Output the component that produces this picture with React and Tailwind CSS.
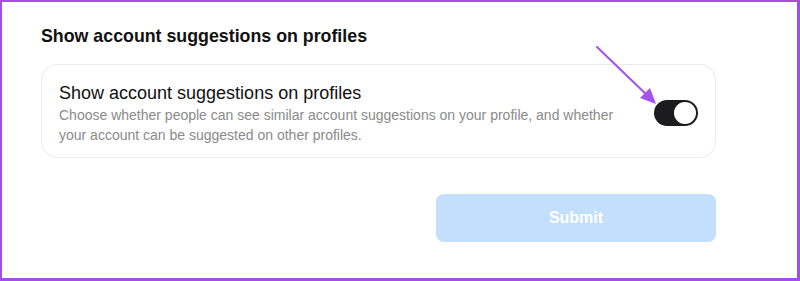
import React, { useState } from "react";

export default function App() {
  const [on, setOn] = useState(true);

  return (
    <div
      className="relative w-[800px] h-[281px] bg-white border-[#a34fe6] border-t-2 border-l-2 border-r-[3px] border-b-[3px]"
      style={{ fontFamily: '"Liberation Sans", Arial, sans-serif' }}
    >
      <div className="pl-[39px] pr-[81px] pt-[22px]">
        <h2 className="text-[17.8px] leading-6 font-bold text-[#111]">Show account suggestions on profiles</h2>

        <div className="mt-4 rounded-2xl border border-[#ebebeb] pl-[17px] pr-[17px] pt-4 pb-3 flex items-center justify-between">
          <div>
            <div className="text-[18px] leading-6 text-[#111]">Show account suggestions on profiles</div>
            <p className="text-[14px] leading-5 text-[#8a8a8a]">
              Choose whether people can see similar account suggestions on your profile, and whether
              <br />
              your account can be suggested on other profiles.
            </p>
          </div>
          <button
            onClick={() => setOn(!on)}
            className={
              "w-[44px] h-[26px] rounded-full flex items-center px-[2px] " +
              (on ? "bg-[#1c1c1e] justify-end" : "bg-[#e5e5e5] justify-start")
            }
          >
            <span className="w-[22px] h-[22px] rounded-full bg-white block"></span>
          </button>
        </div>

        <div className="flex justify-end mt-9">
          <button className="w-[280px] h-[48px] rounded-lg bg-[#c3dffb] text-white text-[16px] font-bold">
            Submit
          </button>
        </div>
      </div>

      {/* annotation arrow */}
      <svg className="absolute left-[590px] top-[40px]" width="70" height="70" viewBox="0 0 70 70">
        <line x1="5" y1="5" x2="58" y2="56" stroke="#a452eb" strokeWidth="2" strokeLinecap="round" />
        <path d="M64 62 L48 56 L58 46 Z" fill="#a452eb" />
      </svg>
    </div>
  );
}
